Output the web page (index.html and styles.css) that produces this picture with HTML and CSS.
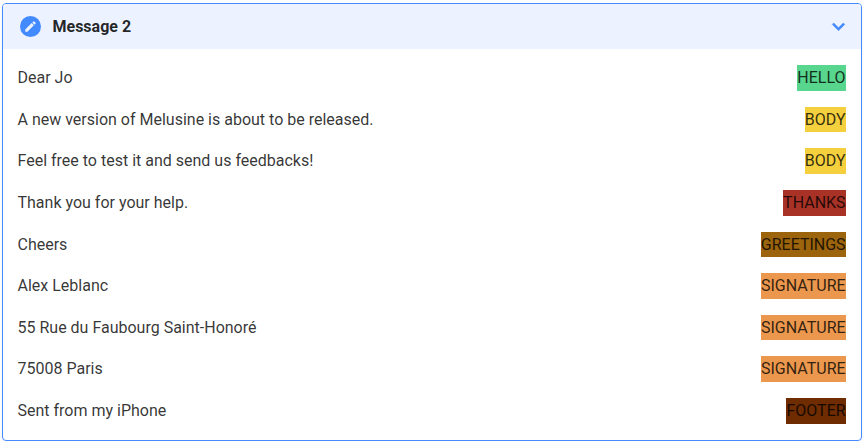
FILE: index.html
```html
<!DOCTYPE html>
<html lang="en">
<head>
<meta charset="utf-8">
<title>Message 2</title>
<link rel="stylesheet" href="styles.css">
</head>
<body>
<details class="card" open>
  <summary class="header">
    <svg class="badge" viewBox="0 0 24 24"><circle cx="12" cy="12" r="12" fill="#448aff"/><path fill="#ecf3ff" d="M6 15.5V18h2.5l7.37-7.37-2.5-2.5L6 15.5zm11.8-6.8c.27-.26.27-.68 0-.94l-1.56-1.56a.66.66 0 0 0-.94 0l-1.22 1.22 2.5 2.5L17.8 8.7z"/></svg>
    <span class="title">Message 2</span>
    <svg class="chevron" viewBox="0 0 24 24"><path fill="#448aff" stroke="#448aff" stroke-width=".5" d="M7.41 8.59 12 13.17l4.59-4.58L18 10l-6 6-6-6z"/></svg>
  </summary>
  <div class="content">
    <div class="row"><span>Dear Jo</span><span class="tag hello">HELLO</span></div>
    <div class="row"><span>A new version of Melusine is about to be released.</span><span class="tag body">BODY</span></div>
    <div class="row"><span>Feel free to test it and send us feedbacks!</span><span class="tag body">BODY</span></div>
    <div class="row"><span>Thank you for your help.</span><span class="tag thanks">THANKS</span></div>
    <div class="row"><span>Cheers</span><span class="tag greetings">GREETINGS</span></div>
    <div class="row"><span>Alex Leblanc</span><span class="tag signature">SIGNATURE</span></div>
    <div class="row"><span>55 Rue du Faubourg Saint-Honoré</span><span class="tag signature">SIGNATURE</span></div>
    <div class="row"><span>75008 Paris</span><span class="tag signature">SIGNATURE</span></div>
    <div class="row"><span>Sent from my iPhone</span><span class="tag footer">FOOTER</span></div>
  </div>
</details>
</body>
</html>
```
FILE: styles.css
```css
body {
  margin: 0;
  background: #fff;
  font-family: Roboto, sans-serif;
  font-size: 16px;
  color: rgba(0, 0, 0, 0.8);
}
.card {
  box-sizing: border-box;
  width: 860px;
  height: 438px;
  margin: 3px 0 0 2px;
  border: 1px solid #448aff;
  border-radius: 4px;
  overflow: hidden;
  box-shadow: 0 2px 4px rgba(0, 0, 0, 0.05);
}
.header {
  display: flex;
  align-items: center;
  height: 45px;
  padding: 0 10px 0 17px;
  background: #ecf2ff;
  list-style: none;
}
.badge {
  width: 21px;
  height: 21px;
}
.title {
  flex: 1;
  margin-left: 11.5px;
  font-weight: 700;
  color: rgba(0, 0, 0, 0.85);
}
.chevron {
  width: 25px;
  height: 25px;
}
.content {
  padding: 16.2px 15.4px 0 14.5px;
}
.row {
  display: flex;
  justify-content: space-between;
  height: 25.6px;
  margin-bottom: 16px;
  line-height: 25.6px;
}
.hello { background: #58d68d; }
.body { background: #f4d03f; }
.thanks { background: #a93226; }
.greetings { background: #9c640c; }
.signature { background: #eb984e; }
.footer { background: #6e2c00; }
```
